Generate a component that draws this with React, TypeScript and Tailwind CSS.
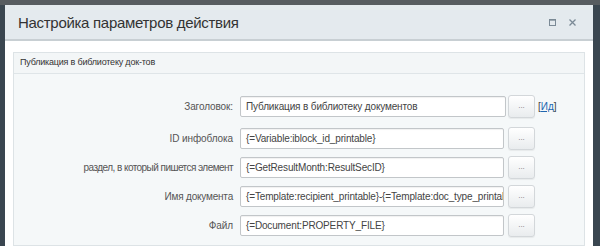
import React from "react";

const rows = [
  { label: "Заголовок:", value: "Публикация в библиотеку документов", link: true, tr: "tracking-[-0.1px]" },
  { label: "ID инфоблока", value: "{=Variable:iblock_id_printable}", tr: "tracking-[-0.1px]" },
  { label: "раздел, в который пишется элемент", value: "{=GetResultMonth:ResultSecID}", tr: "tracking-[-0.55px]" },
  { label: "Имя документа", value: "{=Template:recipient_printable}-{=Template:doc_type_printable}", tr: "tracking-[-0.2px]" },
  { label: "Файл", value: "{=Document:PROPERTY_FILE}", tr: "tracking-[-0.1px]" },
];

export default function App() {
  return (
    <div
      className="w-[600px] h-[246px] overflow-hidden bg-[#3a4650] flex flex-col"
      style={{ fontFamily: '"Liberation Sans", Arial, sans-serif' }}
    >
      <div className="h-[5px] bg-[#575c60] shrink-0" />
      <div className="flex flex-1 min-h-0">
        <div className="w-[5px] shrink-0" />
        <div className="w-[588px] bg-white flex flex-col min-h-0">
          <div className="h-[36px] shrink-0 bg-[#e4eaee] border-b-2 border-[#c8cfd3] flex items-center justify-between pl-[13px] pr-[17px]">
            <span className="text-[15px] tracking-[-0.3px] text-[#333] leading-none mt-[1px]">
              Настройка параметров действия
            </span>
            <div className="flex items-center gap-[13px] mt-[1px]">
              <svg width="7" height="7" viewBox="0 0 7 7">
                <rect x="0.5" y="0.5" width="6" height="6" fill="none" stroke="#7b8a96" strokeWidth="1" />
                <line x1="0" y1="1.2" x2="7" y2="1.2" stroke="#7b8a96" strokeWidth="1" />
              </svg>
              <svg width="7" height="7" viewBox="0 0 7 7">
                <path d="M0.5 0.5 L6.5 6.5 M6.5 0.5 L0.5 6.5" stroke="#7b8a96" strokeWidth="1.3" />
              </svg>
            </div>
          </div>
          <div className="flex-1 pt-[11px] pl-[8px] pr-[8px] min-h-0">
            <div className="border border-[#dde3e6] bg-[#f5f8f9] h-full">
              <div className="h-[21px] border-b border-[#dfe5e8] bg-[#f3f6f7] flex items-center pl-[6px] text-[9px] tracking-[-0.2px] text-[#333]">
                Публикация в библиотеку док-тов
              </div>
              <div className="pt-[21px] flex flex-col gap-[6px]">
                {rows.map((r, i) => (
                  <div key={i} className={"flex items-center h-[23px] " + (i === 1 ? "mt-[3px]" : "")}>
                    <div className={"w-[219px] text-right text-[10px] text-[#555] whitespace-nowrap " + r.tr}>{r.label}</div>
                    <div
                      className={
                        "ml-[7px] h-[21px] border border-[#c2c6c9] bg-white rounded-[2px] flex items-center px-[5px] text-[10px] tracking-[-0.15px] text-[#444] overflow-hidden whitespace-nowrap shadow-[inset_0_1px_1px_rgba(0,0,0,0.06)] " +
                        (r.link ? "w-[266px]" : "w-[264px]")
                      }
                    >
                      {r.value}
                    </div>
                    <div
                      className={
                        "h-[23px] w-[27px] rounded-[3px] border border-[#d3d7da] bg-gradient-to-b from-white to-[#e9ecee] flex items-center justify-center text-[8px] text-[#777] leading-none pb-[2px] shadow-[0_1px_1px_rgba(0,0,0,0.06)] " +
                        (r.link ? "ml-[2px]" : "ml-[4px]")
                      }
                    >
                      ...
                    </div>
                    {r.link && (
                      <span className="ml-[3px] text-[10px] text-[#444]">
                        [<span className="text-[#2067b0] underline">Ид</span>]
                      </span>
                    )}
                  </div>
                ))}
              </div>
            </div>
          </div>
        </div>
      </div>
    </div>
  );
}
